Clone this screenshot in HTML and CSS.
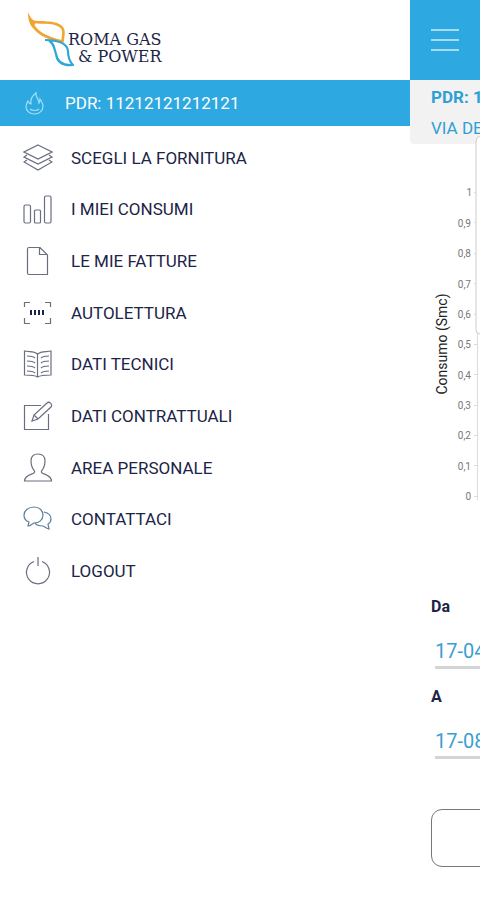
FILE: index.html
```html
<!DOCTYPE html>
<html lang="it">
<head>
<meta charset="utf-8">
<meta name="viewport" content="width=device-width, initial-scale=1">
<title>Roma Gas &amp; Power</title>
<link rel="stylesheet" href="styles.css">
</head>
<body>
<div class="app">
  <aside class="drawer">
    <div class="brand">
      <svg class="brand-mark" viewBox="0 0 48 56" aria-hidden="true">
        <path d="M3 9C8 11 13 10 18 10.500C29 11 36 14 35.500 21L34.500 29.500C22 27 7 22 3 9Z" fill="none" stroke="#f0a52e" stroke-width="2.600" stroke-linejoin="round"/>
        <path d="M0 0C0 6 1 12 5 16L8 10C4 8 2 5 0 0Z" fill="#f0a52e"/>
        <path d="M17 28C31 28 39 31 40 39C40 45 42 50 45 53C34 54 29 49 28 42C26 36 26 31 21 29" fill="none" stroke="#2fa5d8" stroke-width="2.200" stroke-linejoin="round"/>
      </svg>
      <p class="brand-name">ROMA GAS<br>&amp; POWER</p>
    </div>
    <div class="supply">
      <svg class="supply-icon" viewBox="0 0 20 24" aria-hidden="true">
        <path d="M3 10C4 12 4 13 6 13C5 9 7 5 11 2C10 6 14 8 14 12C15 11 15 10 15 8C17 11 18 13 18 15C18 20 14 23 9.500 23C5 23 1 20 1 16C1 13 2 12 3 10ZM5 18C7 20 12 20 14 18"/>
      </svg>
      <span>PDR: 11212121212121</span>
    </div>
    <nav>
      <ul class="menu">
        <li><a href="#fornitura"><svg viewBox="0 0 30 30" aria-hidden="true"><path d="M15 2L29 9L15 16L1 9ZM4 12L1 14L15 21L29 14L26 12M4 17L1 19L15 27L29 19L26 17"/></svg>SCEGLI LA FORNITURA</a></li>
        <li><a href="#consumi"><svg viewBox="0 0 30 30" aria-hidden="true"><rect x="1" y="11" width="6.500" height="18" rx="1.500"/><rect x="11.500" y="16" width="6" height="13" rx="1"/><rect x="21.500" y="2" width="6.500" height="27" rx="1.500"/></svg>I MIEI CONSUMI</a></li>
        <li><a href="#fatture"><svg viewBox="0 0 30 30" aria-hidden="true"><path d="M6 1.500H17L24.500 9V28.500H6Q4.500 28.500 4.500 27V3Q4.500 1.500 6 1.500ZM16.500 1.500V8.500H24.500"/></svg>LE MIE FATTURE</a></li>
        <li><a href="#autolettura"><svg viewBox="0 0 30 30" aria-hidden="true"><path d="M1.500 9V4.500H7M22 4.500H27.500V9M1.500 20V25.500H7M22 25.500H27.500V20"/><path class="bars" d="M8 12V17M12 12V17M16 12V17M20 12V17"/></svg>AUTOLETTURA</a></li>
        <li><a href="#tecnici"><svg viewBox="0 0 30 30" aria-hidden="true"><path d="M14.500 5C12 2 7 3 1.500 2V26C7 26 12 26 14.500 28C18 26 23 26 28 26V2C23 3 18 2 14.500 5ZM14.500 5V28M4 7C8 7 10 7 12 9M4 12C8 12 10 12 12 14M4 17C8 17 10 17 12 19M4 22C8 22 10 22 12 24M26 7C22 7 20 7 18 9M26 12C22 12 20 12 18 14M26 17C22 17 20 17 18 19M26 22C22 22 20 22 18 24"/></svg>DATI TECNICI</a></li>
        <li><a href="#contrattuali"><svg viewBox="0 0 30 30" aria-hidden="true"><path d="M18 4.500H1.500V28.500H25.500V13M9 20L11 14L24 2C26 0 30 3 28 6L15 18ZM11 14L15 18"/></svg>DATI CONTRATTUALI</a></li>
        <li><a href="#personale"><svg viewBox="0 0 30 30" aria-hidden="true"><path d="M11.500 18C9 15 8 12 8 8C8 3 11 1 15 1C19 1 22 3 22 8C22 12 21 15 18.500 18C17 22 28 20 28.500 28H1.500C2 20 13 22 11.500 18Z"/></svg>AREA PERSONALE</a></li>
        <li><a href="#contattaci"><svg class="blue" viewBox="0 0 30 30" aria-hidden="true"><path d="M5 22L6 18C3 17 1 14 1 11C1 7 5 3 11 3C17 3 20 7 20 11C20 16 16 19 11 19C9 20 7 22 5 22ZM21 8C26 9 28 12 28 15C28 17 27 19 25 20L26 25C23 24 22 23 20 22C16 22 13 21 12 19"/></svg>CONTATTACI</a></li>
        <li><a href="#logout"><svg viewBox="0 0 30 30" aria-hidden="true"><path d="M11 5.500A11.500 11.500 0 1 0 19 5.500M15 1V10"/></svg>LOGOUT</a></li>
      </ul>
    </nav>
  </aside>
  <main class="page">
    <div class="page-inner">
      <header class="topbar">
        <button class="menu-button" type="button" aria-label="Menu"><span></span><span></span><span></span></button>
      </header>
      <section class="address">
        <strong>PDR: 11212121212121</strong>
        <span>VIA DE</span>
      </section>
      <svg class="chart" viewBox="0 0 70 400" role="img" aria-label="Consumo (Smc)">
        <path class="card" d="M70 0Q66 1 66 6V194Q66 198 70 198"/>
        <path class="axis" d="M67.500 198V364M64 56.500H66M64 86.500H66M64 117.500H66M64 147.500H66M64 178.500H66M64 208.500H68M64 238.500H68M64 269.500H68M64 299.500H68M64 329.500H68M64 360.500H68"/>
        <g class="ticks">
          <text x="62" y="60">1</text><text x="61" y="91">0,9</text><text x="61" y="121">0,8</text><text x="61" y="152">0,7</text><text x="61" y="182">0,6</text><text x="61" y="212">0,5</text><text x="61" y="243">0,4</text><text x="61" y="273">0,3</text><text x="61" y="303">0,2</text><text x="61" y="334">0,1</text><text x="61" y="364">0</text>
        </g>
        <text class="axis-title" transform="translate(37 208) rotate(-90)">Consumo (Smc)</text>
      </svg>
      <form class="range">
        <label for="from">Da</label>
        <input id="from" type="text" value="17-04">
        <label for="to">A</label>
        <input id="to" type="text" value="17-08">
        <button class="submit" type="button" aria-label="Conferma"></button>
      </form>
    </div>
  </main>
</div>
</body>
</html>
```
FILE: styles.css
```css
* {
  box-sizing: border-box;
}

body {
  margin: 0;
  background: #fff;
  color: #1c2447;
  font-family: Roboto, "Liberation Sans", sans-serif;
}

.app {
  display: flex;
  min-height: 100vh;
  overflow: hidden;
}

/* Drawer */
.drawer {
  flex: 1;
  min-width: 0;
  background: #fff;
}

.brand {
  display: flex;
  height: 80px;
  padding: 12px 0 0 28px;
}

.brand-mark {
  width: 48px;
  height: 56px;
}

.brand-name {
  margin: 19px 0 0 -8px;
  color: #1c2447;
  font-family: "DejaVu Serif", serif;
  font-size: 16px;
  line-height: 17px;
  text-align: right;
  white-space: nowrap;
}

.supply {
  display: flex;
  align-items: center;
  gap: 20px;
  height: 46px;
  padding-left: 25px;
  background: #2ea8e0;
  color: #fff;
  font-size: 17px;
}

.supply-icon {
  width: 20px;
  height: 24px;
  fill: none;
  stroke: #9fe0f8;
  stroke-width: 1.2;
}

.menu {
  display: grid;
  grid-auto-rows: 1fr;
  min-height: 465px;
  margin: 6px 0 0;
  padding: 0;
  list-style: none;
}

.menu a {
  display: flex;
  align-items: center;
  gap: 18px;
  height: 100%;
  padding-left: 23px;
  color: #1c2447;
  font-size: 17px;
  text-decoration: none;
}

.menu svg {
  width: 30px;
  height: 30px;
  fill: none;
  stroke: #6a6f80;
  stroke-width: 1.2;
}

.menu .blue {
  stroke: #5d7f9c;
}

.menu .bars {
  stroke: #1c2447;
  stroke-width: 2;
}

/* Page pushed aside by the open drawer */
.page {
  flex: 0 0 70px;
  overflow: hidden;
}

.page-inner {
  width: 100vw;
}

.topbar {
  display: flex;
  align-items: center;
  height: 80px;
  padding-left: 21px;
  background: #2ea8e0;
}

.menu-button {
  display: grid;
  gap: 8px;
  width: 28px;
  padding: 0;
  border: 0;
  background: none;
}

.menu-button span {
  height: 2px;
  background: #a4dcf4;
}

.address {
  display: flex;
  flex-direction: column;
  gap: 11px;
  height: 64px;
  padding: 7px 21px;
  border-radius: 0 0 4px 4px;
  background: #f2f2f2;
  color: #2ea0d4;
  font-size: 17px;
  line-height: 20px;
}

.chart {
  display: block;
  position: relative;
  width: 70px;
  height: 400px;
  margin-top: -8px;
}

.chart .card {
  fill: #fff;
  stroke: #ccc;
}

.chart .axis {
  fill: none;
  stroke: #ddd;
}

.ticks {
  fill: #777;
  font-size: 10px;
  text-anchor: end;
}

.axis-title {
  fill: #222;
  font-size: 14px;
  text-anchor: middle;
}

.range {
  display: flex;
  flex-direction: column;
  padding: 61px 21px 32px;
}

.range label {
  color: #1c2447;
  font-size: 16px;
  font-weight: 700;
  line-height: 20px;
}

.range input {
  height: 34px;
  margin: 18px 0 18px 4px;
  padding: 0;
  border: 0;
  border-bottom: 3px solid #d4d4d4;
  background: none;
  color: #3a9fd0;
  font: 20px Roboto, "Liberation Sans", sans-serif;
}

.submit {
  height: 58px;
  margin-top: 32px;
  border: 1px solid #777;
  border-radius: 11px;
  background: #fff;
}
```
